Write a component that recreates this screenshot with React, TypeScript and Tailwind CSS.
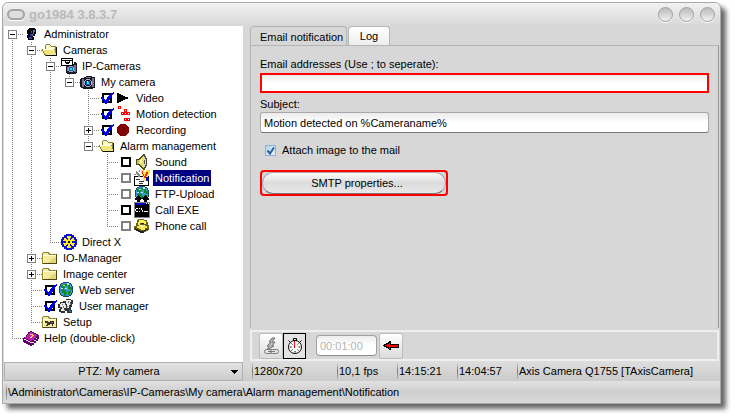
import { useState } from 'react';
import type { ReactNode } from 'react';

type Node = {
  name: string;
  icon: ReactNode;
  box?: 'plus' | 'minus';
  tick?: 'on' | 'off' | 'dim';
  children?: Node[];
};

function Icon({ children }: { children: ReactNode }) {
  return (
    <svg width="16" height="16" viewBox="0 0 16 16" shapeRendering="crispEdges" className="shrink-0" aria-hidden="true">
      {children}
    </svg>
  );
}

const head = (
  <Icon>
    <path d="M6 2h6v1h1v5h-1v2h-2v1h1v3H5v-2H4V9h1V8H4V4h1V3h1z" fill="#05050f" />
    <path d="M8 5h1v2H8zM7 8h2v2H7zM6 11h3v2H6z" fill="#2a3dbb" />
    <path d="M10 4h2v2h-1v2h-1zM9 8h1v2H9z" fill="#6472a8" />
  </Icon>
);

const openFolder = (
  <Icon>
    <path d="M3 3h1V2h4v1h1v1h5v9h1v1H3v-1H2v-2H1V9H0V7h3z" fill="#87861c" />
    <path d="M4 3h4v1h1v1h4v2H4z" fill="#fffbd0" />
    <path d="M1 7h11v1h1v3h1v2H4v-1H3v-1H2V9H1z" fill="#f1e57b" />
    <path d="M1 7h11v1H2v1H1z" fill="#fffde0" />
    <path d="M14 5h1v9H4v-1h10z" fill="#111" />
  </Icon>
);

const closedFolder = (
  <Icon>
    <path d="M1 2h6v1h1v1h7v10H0V3h1z" fill="#8c8522" />
    <path d="M1 3h5v1h1v1h7v8H1z" fill="#f5eba0" />
    <path d="M1 5h13v1H2v7H1z" fill="#fffee6" />
    <path d="M9 9h2V8h2V7h1v6H6v-1h2v-1h1z" fill="#e7d66c" />
    <path d="M14 4h1v10H1v-1h13z" fill="#4a4720" />
  </Icon>
);

const camera = (
  <Icon>
    <path d="M1 4h3V3h2V2h6v1h3v11h-2v1H3v-1H1v-1H0V5h1z" fill="#151522" />
    <path d="M2 5h2v8H2zM12 4h2v9h-2zM6 3h5v1H6z" fill="#77778c" />
    <path d="M5 6h1V5h4v1h1v1h1v4h-1v1h-1v1H6v-1H5v-1H4V7h1z" fill="#aeb2c4" />
    <path d="M6 6h4v1h1v4h-1v1H6v-1H5V7h1z" fill="#10103c" />
    <path d="M6 7h4v4H6z" fill="#0068a8" />
    <path d="M7 8h2v2H7z" fill="#25e0e8" />
    <path d="M7 7h1v1H7z" fill="#fff" />
  </Icon>
);

const ipCamera = (
  <Icon>
    <path d="M6 6h7V4h2v1h1v10h-1v1H6v-1H5V8h1z" fill="#1b1b2b" />
    <path d="M13 7h2v7h-2zM6 9h1v4H6z" fill="#77778c" />
    <path d="M8 8h4v1h1v4h-1v1H8v-1H7V9h1z" fill="#9fa6bd" />
    <path d="M8 9h4v4H8z" fill="#0068a8" />
    <path d="M9 10h2v2H9z" fill="#25e0e8" />
    <path d="M0 0h12v8H0z" fill="#000" />
    <path d="M1 1h10v1H1zM1 3h3v4H1zM9 3h2v4H9zM5 3h3v1H5zM4 5h1v1h3V5h1v2H4z" fill="#fff" />
  </Icon>
);

const play = (
  <Icon>
    <path d="M2 3h2v1h2v1h2v1h2v1h3v2h-3v1H8v1H6v1H4v1H2z" fill="#000" />
  </Icon>
);

const motion = (
  <Icon>
    <path d="M3 0h3v3H3zM9 3h3v3H9zM6 6h9v3H6zM9 12h6v3H9z" fill="#f00" />
    <path d="M4 1h1v1H4zM10 4h1v1h-1zM7 7h1v1H7zM10 7h1v1h-1zM13 7h1v1h-1zM10 13h1v1h-1zM13 13h1v1h-1z" fill="#fff" />
  </Icon>
);

const record = (
  <Icon>
    <path d="M5 2h6v1h1v1h1v1h1v6h-1v1h-1v1h-1v1H5v-1H4v-1H3v-1H2V5h1V4h1V3h1z" fill="#800000" />
  </Icon>
);

const sound = (
  <Icon>
    <path d="M2 5h3V4h1V3h1V2h1V1h1V0h2v2h1v2h1v8h-1v2h-1v2H9v-1H8v-1H7v-1H6v-1H5v-1H2z" fill="#4d4a1c" />
    <path d="M3 6h2v4H3z" fill="#c2bb58" />
    <path d="M5 6h1V5h1V4h1V3h1V2h1v12H9v-1H8v-1H7v-1H6v-1H5z" fill="#e8e06c" />
    <path d="M6 6h1V5h1v4H6z" fill="#fffbc4" />
    <path d="M10 3h1v2h1v6h-1v2h-1z" fill="#d4d4d4" />
    <path d="M10 6h1v4h-1z" fill="#555" />
  </Icon>
);

const notification = (
  <Icon>
    <path d="M0 6h15v10H0z" fill="#000" />
    <path d="M1 7h13v8H1z" fill="#fff" />
    <path d="M2 9h4v1H2zM5 11h5v1H5zM5 13h4v1H5z" fill="#333" />
    <path d="M2 1h1v1h1v1h1v1h1v3H4V5H3V4H2zM5 0h1v2H5zM0 4h2v1H0z" fill="#888" />
    <path d="M7 0h3v2h2V0h4v3h-1v2h-1v4h-2v2H9V6H8V3H7z" fill="#ffe23a" />
    <path d="M8 1h1v3h1v2h1V4h1V2h2v2h-1v2h-1v2h-2V6H9V4H8z" fill="#e8281d" />
    <path d="M12 7h3v4h-3z" fill="#0a0a9c" />
  </Icon>
);

const globeShape = (
  <>
    <path d="M5 0h6v1h2v1h1v2h1v7h-1v2h-1v1h-2v1H5v-1H3v-1H2v-2H1V4h1V2h1V1h2z" fill="#124a66" />
    <path d="M5 1h6v1h2v2h1v7h-1v2h-2v1H5v-1H3v-2H2V4h1V2h2z" fill="#3c96e2" />
    <path d="M3 3h2V2h4v2H7v2H6v2h2v2h1v2H8v2H6v-3H4V9H3zM10 3h2v2h2v3h-2V7h-2zM10 9h3v2h-1v2h-2z" fill="#128b28" />
    <path d="M5 3h2v1H5zM9 1h2v2H9zM3 6h2v1H3zM7 6h2v1H7z" fill="#bdf0d8" />
  </>
);

const webServer = <Icon>{globeShape}</Icon>;

const ftp = (
  <Icon>
    {globeShape}
    <path d="M0 12h16v4H0z" fill="#fff" />
    <path d="M4 9h1v1h1v1h1v1h2v-1h1v-1h1V9h1v1h1v1h1v1h1v2h-2v2h-3v-2H9v-1H7v1H6v2H3v-2H1v-2h1v-1h1v-1h1z" fill="#000" />
  </Icon>
);

const callExe = (
  <Icon>
    <path d="M0 0h16v16H0z" fill="#888" />
    <path d="M1 1h14v14H1z" fill="#000" />
    <path d="M2 1h9v2H2z" fill="#0000c8" />
    <path d="M12 1h1v1h-1zM14 1h1v1h-1zM2 6h2v1H2zM1 7h1v2H1zM2 9h2v1H2zM5 6h1v1H5zM5 9h1v1H5zM7 6h1v2H7zM8 8h1v2H8zM10 9h4v1h-4z" fill="#fff" />
  </Icon>
);

const phone = (
  <Icon>
    <path d="M4 1h6v1h3v2h1v3h1v5h-1v1h-2v1h-2v1H6v-1H4v-1H2v-1H0V8h2V5h1V2h1z" fill="#6b6514" />
    <path d="M5 2h5v1h2v3h-2V5H6v2H4V4h1z" fill="#ffef55" />
    <path d="M3 8h2V7h6v1h2v2h-2v2H7v-1H5v-1H3z" fill="#f6e34b" />
    <path d="M6 7h2v1H6zM8 8h2v1H8zM10 7h1v1h-1zM7 9h1v1H7zM9 10h1v1H9z" fill="#fff" />
    <path d="M1 10h1v1h2v1h2v1h4v-1h2v-1h2v1h-2v1h-2v2H6v-1H4v-1H2v-1H1zM7 5h3v1H7z" fill="#222" />
  </Icon>
);

const directX = (
  <Icon>
    <path d="M5 0h6v1h2v2h2v2h1v6h-1v2h-2v2h-2v1H5v-1H3v-2H1v-2H0V5h1V3h2V1h2z" fill="#0d12cf" />
    <path d="M6 2h4v2H9v2h1V5h1V4h2v2h1v1h-3v2h3v1h-1v2h-2v-1h-1v-1H9v2h1v2H6v-2h1v-2H6v1H5v1H3v-2H2V9h3V7H2V6h1V4h2v1h1v1h1V4H6z" fill="#ffed24" />
    <path d="M7 7h2v2H7z" fill="#111" />
  </Icon>
);

const users = (
  <Icon>
    <path d="M8 1h5v1h2v4h-1v3h-1v3h1v3H9v-2H7v2H3v-1H1v-3h1v-1H0V6h2V4h3V3h3z" fill="#333" />
    <path d="M8 2h5v2h-1v3h-1v3H9V6H8zM3 5h4v2h1v3H6v2h1v1H3v-2h1V9H2V6h1z" fill="#e9e9e9" />
    <path d="M10 3h1v2h-1zM12 5h1v2h-1zM4 6h1v1H4zM5 8h1v2H5zM9 8h1v1H9z" fill="#777" />
    <path d="M11 12h2v2h-2z" fill="#18913a" />
    <path d="M12 11h1v2h-1z" fill="#1d37bd" />
  </Icon>
);

const setup = (
  <Icon>
    <path d="M1 2h6v1h1v1h7v10H0V3h1z" fill="#8c8522" />
    <path d="M1 3h5v1h1v1h7v8H1z" fill="#f5eba0" />
    <path d="M1 5h13v1H2v7H1z" fill="#fffee6" />
    <path d="M14 4h1v10H1v-1h13z" fill="#4a4720" />
    <path d="M3 7h3v1h2V7h4v3h-1v2h-1v-2H8v1H6v1H4v-1h1V9H3z" fill="#333" />
    <path d="M5 8h1v1H5zM9 8h2v1H9z" fill="#c9322b" />
  </Icon>
);

const help = (
  <Icon>
    <path d="M7 1h2v1h2v1h2v1h2v1h1v4h-1v2h-2v2h-2v2H9v1H7v-1H5v-1H3v-1H1v-1H0V8h1V7h2V5h1V4h1V2h2z" fill="#5d0061" />
    <path d="M7 2h2v1h2v1h2v1h1v1h-1v2h-2v2H9v1H7v-1H5V9H3V8H2V7h2V5h1V4h1V3h1z" fill="#c318c0" />
    <path d="M1 9h2v1h2v1h2v1h2v1H7v-1H5v-1H3v-1H1zM9 12h2v-2h2V8h1v1h-1v2h-2v2H9z" fill="#e8dbe8" />
    <path d="M7 4h3v1h1v1h-1v1H9v1H7V7h1V6h1V5H7z" fill="#ffe42f" />
  </Icon>
);

const tree: Node[] = [
  {
    name: 'Administrator',
    icon: head,
    box: 'minus',
    children: [
      {
        name: 'Cameras',
        icon: openFolder,
        box: 'minus',
        children: [
          {
            name: 'IP-Cameras',
            icon: ipCamera,
            box: 'minus',
            children: [
              {
                name: 'My camera',
                icon: camera,
                box: 'minus',
                children: [
                  { name: 'Video', icon: play, tick: 'on' },
                  { name: 'Motion detection', icon: motion, tick: 'on' },
                  { name: 'Recording', icon: record, tick: 'on', box: 'plus' },
                  {
                    name: 'Alarm management',
                    icon: openFolder,
                    box: 'minus',
                    children: [
                      { name: 'Sound', icon: sound, tick: 'off' },
                      { name: 'Notification', icon: notification, tick: 'dim' },
                      { name: 'FTP-Upload', icon: ftp, tick: 'dim' },
                      { name: 'Call EXE', icon: callExe, tick: 'off' },
                      { name: 'Phone call', icon: phone, tick: 'dim' },
                    ],
                  },
                ],
              },
            ],
          },
          { name: 'Direct X', icon: directX },
        ],
      },
      { name: 'IO-Manager', icon: closedFolder, box: 'plus' },
      { name: 'Image center', icon: closedFolder, box: 'plus' },
      { name: 'Web server', icon: webServer, tick: 'on' },
      { name: 'User manager', icon: users, tick: 'on' },
      { name: 'Setup', icon: setup },
    ],
  },
  { name: 'Help (double-click)', icon: help },
];

const status = [
  { text: '1280x720', width: 'w-[85px]' },
  { text: '10,1 fps', width: 'w-[60px]' },
  { text: '14:15:21', width: 'w-[60px]' },
  { text: '14:04:57', width: 'w-[60px]' },
  { text: 'Axis Camera Q1755 [TAxisCamera]', width: 'flex-1' },
];

// dotted connector lines, one cell per tree level
function Guide({ d }: { d: string }) {
  return (
    <svg width="19" height="16" className="shrink-0" aria-hidden="true">
      <path d={d} fill="none" stroke="#808080" strokeDasharray="1 1" shapeRendering="crispEdges" />
    </svg>
  );
}

function TickBox({ id, state }: { id: string; state: 'on' | 'off' | 'dim' }) {
  return (
    <span className="relative h-4 w-4 shrink-0">
      <input
        id={id}
        type="checkbox"
        defaultChecked={state === 'on'}
        className={`peer m-[3px] block h-2.5 w-2.5 appearance-none border-2 bg-white ${state === 'dim' ? 'border-[#808080]' : 'border-black'}`}
      />
      <svg
        width="16"
        height="16"
        shapeRendering="crispEdges"
        className="pointer-events-none absolute inset-0 hidden peer-checked:block"
      >
        <path d="M14 2h1v2h-1v1h-1v2h-1v1h-1v2h-1v1H9v2H8v1H6v-1H5v-2H4v-1H3V9H2V7h2v1h1v1h1v1h1V9h1V7h1V6h1V5h1V4h1V3h2z" fill="#0000f0" />
      </svg>
    </span>
  );
}

function Branch({ nodes, trail, selected, onSelect }: {
  nodes: Node[];
  trail: boolean[];
  selected: string;
  onSelect: (name: string) => void;
}) {
  return (
    <ul>
      {nodes.map((node, i) => {
        const last = i === nodes.length - 1;
        const first = trail.length === 0 && i === 0;
        const id = node.name.replace(/\W/g, '');
        const label = `ml-[3px] px-0.5 leading-4 whitespace-nowrap ${selected === node.name ? 'bg-[#000080] text-white' : ''}`;
        return (
          <li key={node.name}>
            <div className="flex h-4">
              {trail.map((open, level) => (
                <Guide key={level} d={open ? 'M8.5 0V16' : ''} />
              ))}
              <span className="relative h-4 w-[19px] shrink-0">
                <Guide d={`M8.5 ${first ? 8 : 0}V${last ? 8 : 16}M8 8.5H19`} />
                {node.box && (
                  <button aria-label={`Toggle ${node.name}`} className="absolute top-1 left-1 h-[9px] w-[9px] bg-white">
                    <svg width="9" height="9" shapeRendering="crispEdges" className="block">
                      <path d="M.5.5h8v8h-8z" fill="#fff" stroke="#808080" />
                      <path d={node.box === 'plus' ? 'M2 4.5h5M4.5 2v5' : 'M2 4.5h5'} stroke="#000" />
                    </svg>
                  </button>
                )}
              </span>
              {node.tick && <TickBox id={id} state={node.tick} />}
              {node.icon}
              {node.tick ? (
                <label htmlFor={id} className={label}>{node.name}</label>
              ) : (
                <button onClick={() => onSelect(node.name)} className={label}>{node.name}</button>
              )}
            </div>
            {node.children && (
              <Branch nodes={node.children} trail={[...trail, !last]} selected={selected} onSelect={onSelect} />
            )}
          </li>
        );
      })}
    </ul>
  );
}

function TitleBar() {
  const round =
    'h-[15px] w-[15px] rounded-full border border-[#a0a0a0] bg-linear-to-b from-[#bcbcbc] via-[#d4d4d4] to-[#f4f4f4] shadow-[0_1px_0_#fff]';
  return (
    <header className="flex h-[23px] items-center rounded-t-[5px] bg-linear-to-b from-[#f2f2f2] to-[#d7d7d7] pr-[5px] pl-1">
      <button aria-label="Window menu" className="h-[11px] w-[18px] rounded-full border-2 border-[#a2a2a2] bg-[#dedede] shadow-[0_1px_0_#fff]" />
      <h1 className="ml-1 flex-1 text-[13px] leading-4 font-bold text-[#bababa]">go1984 3.8.3.7</h1>
      <div className="flex gap-1.5">
        <button aria-label="Minimize" className={round} />
        <button aria-label="Maximize" className={round} />
        <button aria-label="Close" className={round} />
      </div>
    </header>
  );
}

function EmailPanel() {
  return (
    <section className="flex flex-1 flex-col border-x border-t border-[#b4b4b4] border-r-[#969696] px-[9px] pt-2.5">
      <label htmlFor="addresses" className="leading-4">Email addresses (Use ; to seperate):</label>
      <input
        id="addresses"
        type="text"
        className="mt-px h-5 w-full border-2 border-[#f00] bg-linear-to-b from-[#ececec] to-white to-50% px-1 outline-none"
      />
      <label htmlFor="subject" className="mt-[3px] leading-4">Subject:</label>
      <input
        id="subject"
        type="text"
        defaultValue="Motion detected on %Cameraname%"
        className="h-[21px] w-full rounded-[3px] border border-[#a8a8a8] border-b-[#777] bg-linear-to-b from-[#ececec] to-white to-50% px-[3px] outline-none"
      />
      <div className="mt-[9px] flex items-center pl-[5px]">
        <span className="relative h-[11px] w-[11px]">
          <input
            id="attach"
            type="checkbox"
            defaultChecked
            className="peer block h-[11px] w-[11px] appearance-none border border-[#8fb0d0] bg-linear-to-br from-[#b5d3ef] to-[#e6f2fc]"
          />
          <svg width="11" height="11" className="pointer-events-none absolute inset-0 hidden peer-checked:block">
            <path d="M2.5 5.5l2.5 3 4-6" fill="none" stroke="#2d5f9e" strokeWidth="2" />
          </svg>
        </span>
        <label htmlFor="attach" className="ml-1.5 leading-4">Attach image to the mail</label>
      </div>
      <div className="mt-3 self-start rounded-[4px] border-2 border-[#f00]">
        <button className="block h-[22px] w-[184px] rounded-full border border-[#aaa] border-b-[#777] bg-linear-to-b from-[#fafafa] via-[#dcdcdc] to-[#e8e8e8] pl-1.5">
          SMTP properties...
        </button>
      </div>
    </section>
  );
}

function Toolbar() {
  const tool = 'flex h-[26px] w-6 items-center justify-center rounded-[2px] border border-[#bcbcbc] bg-linear-to-b from-white to-[#dcdcdc]';
  return (
    <div className="flex h-[31px] items-center border-2 border-[#efefef] pl-[7px]">
      <button aria-label="Link trigger" className={tool}>
        <svg width="18" height="20" viewBox="0 0 18 20" fill="none" stroke="#777">
          <path d="M10 2h3l-3 4h3l-3 4h2l-7 4 2-4H5l4-4H7z" fill="#b5b5b5" />
          <rect x="2.5" y="13.5" width="8" height="4" rx="2" fill="#e4e4e4" />
          <rect x="8.5" y="13.5" width="8" height="4" rx="2" fill="#e4e4e4" />
          <path d="M6 15.5h7" />
        </svg>
      </button>
      <button aria-label="Timer" className="flex h-[26px] w-[23px] items-center justify-center border border-black bg-[#e3e3e3]">
        <svg width="16" height="18" viewBox="0 0 16 18" className="shrink-0" fill="none" stroke="#000">
          <circle cx="8" cy="10" r="6.5" fill="#fff" />
          <path d="M6.5 1.5h3v2h-3zM1.5 3.5l2 2M14.5 3.5l-2 2" />
          <path d="M8 14v1.5M3 10h1.5M11.5 10H13M4.5 6.5l1 1M11.5 6.5l-1 1M4.5 13.5l1-1M11.5 13.5l-1-1" />
          <path d="M7.5 4v7" stroke="#f00" />
        </svg>
      </button>
      <input
        type="text"
        aria-label="Interval"
        defaultValue="00:01:00"
        className="ml-2.5 h-[21px] w-[61px] rounded-[4px] border border-[#a0a0a0] border-b-[#8c8c8c] bg-linear-to-b from-[#ececec] to-white to-50% px-[3px] text-[#b4b4b4] outline-none"
      />
      <button aria-label="Apply interval" className={`ml-0.5 ${tool}`}>
        <svg width="16" height="11" viewBox="0 0 16 11" shapeRendering="crispEdges">
          <path d="M0 5h1V4h2V3h2V2h1V1h2v3h8v4H8v2H6V9H5V8H3V7H1V6H0z" fill="#000" />
          <path d="M2 5h2V4h2V3h1v2h8v2H7v2H6V7H4V6H2z" fill="#f00" />
        </svg>
      </button>
    </div>
  );
}

export default function App() {
  const [selected, setSelected] = useState('Notification');
  const separator = 'mr-px h-4 w-px shrink-0 bg-linear-to-b from-[#d0d0d0] via-[#777] to-[#b5b5b5]';

  return (
    <div className="flex min-h-screen bg-white pt-0.5 pr-3.5 pb-3.5 pl-0.5 font-['Liberation_Sans',Arial,sans-serif] text-[11px] text-black">
      <div className="flex flex-1 flex-col rounded-t-[6px] border border-[#a8a8a8] bg-[#d7d7d7] shadow-[5px_5px_5px_rgba(0,0,0,0.6)]">
        <TitleBar />
        <div className="flex flex-1">
          <aside className="ml-px flex w-[239px] shrink-0 flex-col">
            <nav className="flex-1 bg-white">
              <Branch nodes={tree} trail={[]} selected={selected} onSelect={setSelected} />
            </nav>
            <button className="flex h-[19px] items-center border border-[#b0b0b0] bg-linear-to-b from-[#e2e2e2] to-[#cdcdcd] pr-1 pl-0.5">
              <span className="flex-1">PTZ: My camera</span>
              <svg width="7" height="4" shapeRendering="crispEdges">
                <path d="M0 0h7v1H6v1H5v1H4v1H3V3H2V2H1V1H0z" />
              </svg>
            </button>
          </aside>
          <main className="flex min-w-0 flex-1 flex-col pl-1.5">
            <div className="flex flex-1 flex-col pr-px pl-px">
              <div className="flex h-[19px] items-end gap-px">
                <button className="-mb-px h-5 w-[97px] rounded-t-[4px] border border-b-0 border-[#b4b4b4] bg-[#d7d7d7] pl-[9px] text-left leading-4 whitespace-nowrap">
                  Email notification
                </button>
                <button className="h-[19px] w-[42px] rounded-t-[4px] border border-b-0 border-[#b4b4b4] bg-linear-to-b from-white to-[#ededed] leading-4">
                  Log
                </button>
              </div>
              <EmailPanel />
              <div className="mt-0.5">
                <Toolbar />
              </div>
            </div>
            <div className="-ml-1.5 flex h-5 items-center bg-linear-to-b from-[#dedede] to-[#cbcbcb] pl-[9px]">
              {status.map((item) => (
                <div key={item.text} className={`flex items-center ${item.width}`}>
                  <span className={separator} />
                  <span className="whitespace-nowrap">{item.text}</span>
                </div>
              ))}
            </div>
          </main>
        </div>
        <footer className="flex h-[22px] items-center bg-linear-to-b from-[#e2e2e2] via-[#cecece] to-[#dadada] pl-[3px]">
          <span className={separator} />
          <span>\Administrator\Cameras\IP-Cameras\My camera\Alarm management\Notification</span>
        </footer>
      </div>
    </div>
  );
}
